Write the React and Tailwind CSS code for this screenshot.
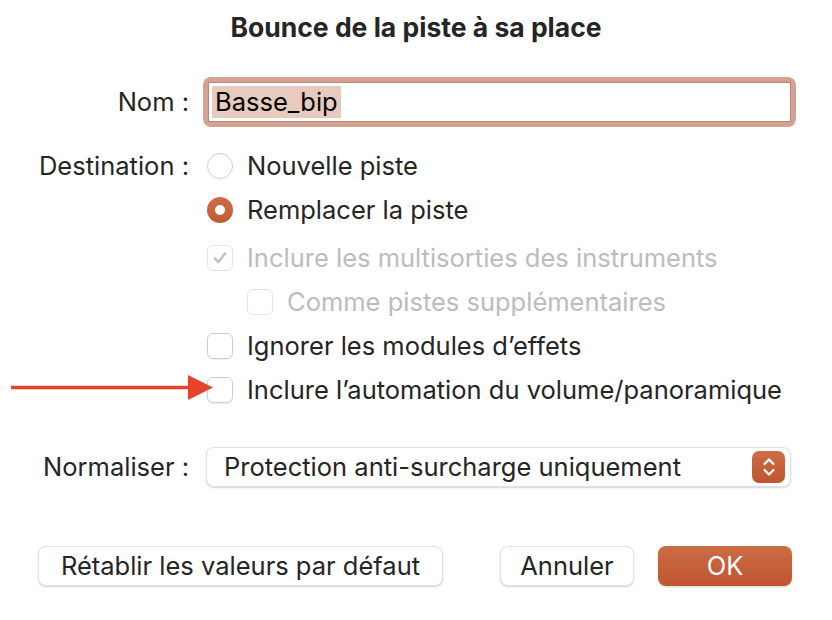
import React from 'react'

const Checkbox = ({ checked, disabled }) => (
  <div
    className={`flex h-[26px] w-[26px] shrink-0 items-center justify-center rounded-[6px] border bg-white ${
      disabled ? 'border-[#e3e3e3]' : 'border-[#cdcdcd] shadow-[0_1px_1px_rgba(0,0,0,0.08)]'
    }`}
  >
    {checked && (
      <svg width="16" height="16" viewBox="0 0 16 16">
        <path d="M3 8.5 L6.5 12 L13 3.5" fill="none" stroke="#c2c2c2" strokeWidth="2.6" strokeLinecap="round" strokeLinejoin="round" />
      </svg>
    )}
  </div>
)

const Radio = ({ selected }) =>
  selected ? (
    <div className="flex h-[26px] w-[26px] shrink-0 items-center justify-center rounded-full bg-gradient-to-b from-[#cc6e46] to-[#c25a33]">
      <div className="h-[10px] w-[10px] rounded-full bg-white" />
    </div>
  ) : (
    <div className="h-[26px] w-[26px] shrink-0 rounded-full border border-[#d0d0d0] bg-white shadow-[inset_0_1px_1px_rgba(0,0,0,0.04)]" />
  )

const Row = ({ children, className = '' }) => (
  <div className={`flex h-[44px] items-center ${className}`}>{children}</div>
)

export default function App() {
  return (
    <div
      className="relative h-[620px] w-[832px] bg-white text-[25.5px] leading-[32px] text-[#252525]"
      style={{ fontFamily: 'Inter, "Noto Sans", sans-serif' }}
    >
      {/* Titre */}
      <div className="pt-[11px] text-center text-[26.5px] font-bold leading-[32px]">
        Bounce de la piste à sa place
      </div>

      {/* Nom */}
      <div className="mt-[34px] flex items-center">
        <div className="w-[189px] text-right">Nom :</div>
        <div className="ml-[14px] h-[50px] w-[593px] rounded-[8px] bg-[#d3a291] p-[5px]">
          <div className="flex h-full items-center border border-[#b98a79] bg-white pl-[3px]">
            <span className="bg-[#e7cbbf] px-[3px] leading-[32px] text-black">Basse_bip</span>
          </div>
        </div>
      </div>

      {/* Destination */}
      <div className="mt-[17px] flex">
        <div className="w-[189px] pt-[6px] text-right">Destination :</div>
        <div className="ml-[18px] flex flex-col">
          <Row>
            <Radio />
            <span className="ml-[14px]">Nouvelle piste</span>
          </Row>
          <Row>
            <Radio selected />
            <span className="ml-[14px]">Remplacer la piste</span>
          </Row>
          <Row className="mt-[4px] text-[#bcbcbc]">
            <Checkbox checked disabled />
            <span className="ml-[14px]">Inclure les multisorties des instruments</span>
          </Row>
          <Row className="pl-[40px] text-[#bcbcbc]">
            <Checkbox disabled />
            <span className="ml-[14px]">Comme pistes supplémentaires</span>
          </Row>
          <Row>
            <Checkbox />
            <span className="ml-[14px]">Ignorer les modules d’effets</span>
          </Row>
          <Row>
            <Checkbox />
            <span className="ml-[14px]">Inclure l’automation du volume/panoramique</span>
          </Row>
        </div>
      </div>

      {/* Flèche */}
      <svg className="absolute left-[10px] top-[374px]" width="205" height="28" viewBox="0 0 205 28">
        <line x1="1" y1="13.5" x2="182" y2="13.5" stroke="#e8432a" strokeWidth="3.5" />
        <polygon points="178,1 203,13.5 178,26" fill="#e8432a" />
      </svg>

      {/* Normaliser */}
      <div className="mt-[35px] flex items-center">
        <div className="w-[189px] text-right">Normaliser :</div>
        <div className="ml-[17px] flex h-[40px] w-[585px] items-center justify-between rounded-[8px] border border-[#e2e2e2] bg-white pl-[17px] pr-[5px] shadow-[0_1px_2px_rgba(0,0,0,0.18)]">
          <span>Protection anti-surcharge uniquement</span>
          <div className="flex h-[32px] w-[33px] items-center justify-center rounded-[7px] bg-gradient-to-b from-[#cc6e46] to-[#c0552f]">
            <svg width="16" height="22" viewBox="0 0 16 22">
              <path d="M3.5 8 L8 3.5 L12.5 8" fill="none" stroke="white" strokeWidth="2.2" strokeLinecap="round" strokeLinejoin="round" />
              <path d="M3.5 14 L8 18.5 L12.5 14" fill="none" stroke="white" strokeWidth="2.2" strokeLinecap="round" strokeLinejoin="round" />
            </svg>
          </div>
        </div>
      </div>

      {/* Boutons */}
      <div className="mt-[59px] flex items-center pl-[38px] pr-[40px]">
        <button className="flex h-[40px] w-[405px] items-center justify-center rounded-[8px] border border-[#e2e2e2] bg-white shadow-[0_1px_2px_rgba(0,0,0,0.18)]">
          Rétablir les valeurs par défaut
        </button>
        <div className="flex-1" />
        <button className="flex h-[40px] w-[134px] items-center justify-center rounded-[8px] border border-[#e2e2e2] bg-white shadow-[0_1px_2px_rgba(0,0,0,0.18)]">
          Annuler
        </button>
        <button className="ml-[24px] flex h-[40px] w-[134px] items-center justify-center rounded-[8px] bg-gradient-to-b from-[#cb6c45] to-[#bf5530] text-white shadow-[0_1px_2px_rgba(0,0,0,0.18)]">
          OK
        </button>
      </div>
    </div>
  )
}
